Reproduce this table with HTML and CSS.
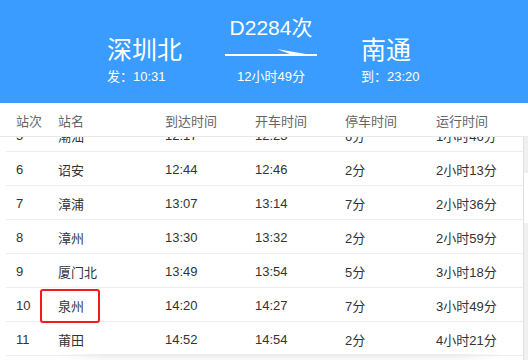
FILE: index.html
```html
<!DOCTYPE html>
<html lang="zh-CN">
<head>
<meta charset="utf-8">
<title>D2284次</title>
<link rel="stylesheet" href="styles.css">
</head>
<body>
<div class="page">
  <header class="hero">
    <div class="station">
      <div class="city">深圳北</div>
      <div class="time">发：10:31</div>
    </div>
    <div class="train">
      <div class="code">D2284次</div>
      <svg class="arrow" width="92" height="10" viewBox="0 0 92 10">
        <rect x="0" y="6" width="92" height="2" fill="#fff"/>
        <polygon points="52,1 92,8 66,6.5" fill="#fff"/>
      </svg>
      <div class="dur">12小时49分</div>
    </div>
    <div class="station">
      <div class="city">南通</div>
      <div class="time">到：23:20</div>
    </div>
  </header>

  <div class="thead">
    <span>站次</span><span>站名</span><span>到达时间</span><span>开车时间</span><span>停车时间</span><span>运行时间</span>
  </div>

  <div class="scroll">
    <div class="rows">
      <div class="row"><span>5</span><span>潮汕</span><span>12:17</span><span>12:23</span><span>6分</span><span>1小时46分</span></div>
      <div class="row"><span>6</span><span>诏安</span><span>12:44</span><span>12:46</span><span>2分</span><span>2小时13分</span></div>
      <div class="row"><span>7</span><span>漳浦</span><span>13:07</span><span>13:14</span><span>7分</span><span>2小时36分</span></div>
      <div class="row"><span>8</span><span>漳州</span><span>13:30</span><span>13:32</span><span>2分</span><span>2小时59分</span></div>
      <div class="row"><span>9</span><span>厦门北</span><span>13:49</span><span>13:54</span><span>5分</span><span>3小时18分</span></div>
      <div class="row"><span>10</span><span>泉州</span><span>14:20</span><span>14:27</span><span>7分</span><span>3小时49分</span></div>
      <div class="row"><span>11</span><span>莆田</span><span>14:52</span><span>14:54</span><span>2分</span><span>4小时21分</span></div>
      <div class="row"><span>12</span><span>福清</span><span>15:12</span><span>15:14</span><span>2分</span><span>4小时41分</span></div>
    </div>
    <div class="scrollbar"><div class="thumb"></div></div>
  </div>

  <div class="highlight"></div>
  <div class="shade"></div>
</div>
</body>
</html>
```

FILE: styles.css
```css
html, body {
  margin: 0;
  padding: 0;
  background: #fff;
}
body {
  width: 528px;
  height: 360px;
  overflow: hidden;
  font-family: "Liberation Sans", "Noto Sans CJK SC", sans-serif;
}
.page {
  position: relative;
  width: 528px;
  height: 360px;
  overflow: hidden;
}
.hero {
  height: 103px;
  background: #3a9cff;
  color: #fff;
  display: flex;
  align-items: flex-start;
  padding-left: 107px;
  box-sizing: border-box;
}
.station {
  padding-top: 35px;
  width: 76px;
  white-space: nowrap;
}
.station + .train { margin-left: 42px; }
.train + .station { margin-left: 44px; }
.city {
  font-family: "Noto Sans CJK SC", sans-serif;
  font-size: 25px;
  line-height: 26px;
}
.time {
  font-size: 13px;
  line-height: 16px;
  margin-top: 8px;
}
.train {
  width: 92px;
  padding-top: 15px;
  text-align: center;
  white-space: nowrap;
}
.code {
  font-size: 21px;
  line-height: 26px;
}
.arrow {
  display: block;
  margin-top: 7px;
}
.dur {
  font-size: 13px;
  line-height: 16px;
  margin-top: 11px;
}
.thead {
  height: 33px;
  border-bottom: 1px solid #e8e8e8;
  display: grid;
  grid-template-columns: 42px 107px 90px 90px 91px 1fr;
  padding-left: 16px;
  align-items: center;
  padding-top: 2px;
  box-sizing: content-box;
  height: 31px;
  color: #666;
  font-size: 13px;
}
.scroll {
  height: 223px;
  overflow: hidden;
  display: flex;
}
.rows {
  margin-top: -19px;
  margin-left: 6px;
  width: 517px;
}
.row {
  height: 33px;
  border-bottom: 1px solid #eeeeee;
  display: grid;
  grid-template-columns: 42px 107px 90px 90px 91px 1fr;
  padding-left: 10px;
  padding-top: 2px;
  box-sizing: border-box;
  height: 34px;
  align-items: center;
  color: #333;
  font-size: 13px;
}
.scrollbar {
  width: 4px;
  border-left: 1px solid #e0e0e0;
  background: #efefef;
  padding-top: 36px;
}
.thumb {
  height: 50px;
  background: #fff;
}
.highlight {
  position: absolute;
  left: 40px;
  top: 289px;
  width: 56px;
  height: 30px;
  border: 2px solid #f21b1b;
  border-radius: 3px;
}
.shade {
  position: absolute;
  left: 58px;
  top: 354px;
  width: 446px;
  height: 6px;
  background: linear-gradient(#eaeaea, #fbfbfb);
  -webkit-mask-image: linear-gradient(90deg, transparent, #000 10%, #000 90%, transparent);
  mask-image: linear-gradient(90deg, transparent, #000 10%, #000 90%, transparent);
}
```
